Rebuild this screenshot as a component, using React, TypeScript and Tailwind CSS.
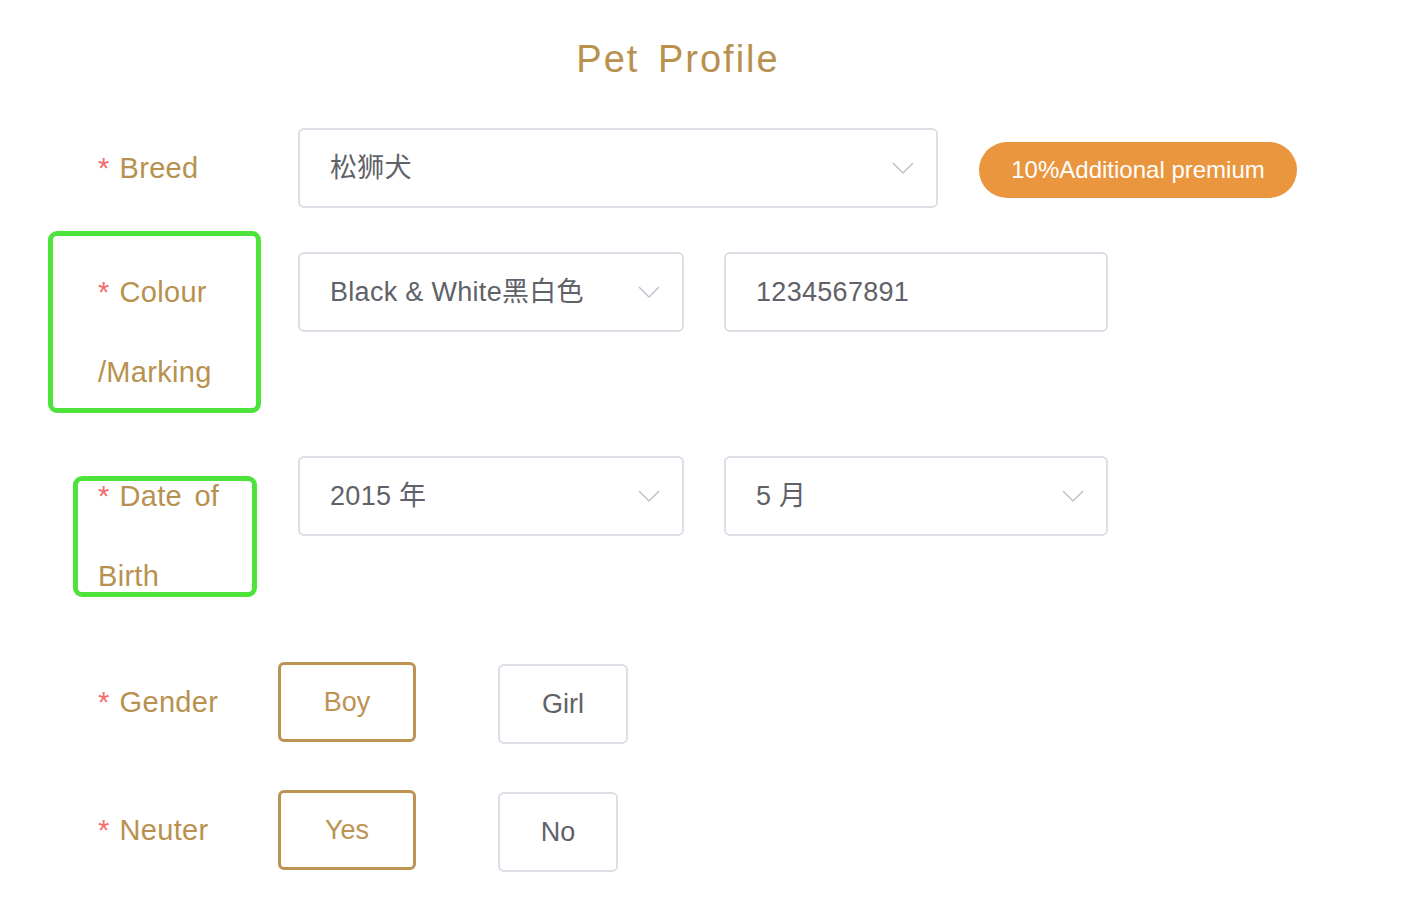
import React from 'react';

const font = "font-['Liberation_Sans','Noto_Sans_CJK_SC',sans-serif]";

const Chevron = () => (
  <svg width="22" height="12" viewBox="0 0 22 12" fill="none" className="shrink-0">
    <path d="M1 1l10 10L21 1" stroke="#c0c4cc" strokeWidth="1.5" />
  </svg>
);

const Label = ({ lines }: { lines: string[] }) => (
  <div className="text-[29px] leading-[80px] text-[#b8914f] tracking-[0.3px]">
    {lines.map((line, i) => (
      <div key={i} className="whitespace-nowrap">
        {i === 0 && <span className="text-[#f56c6c] mr-[10px]">*</span>}
        {line}
      </div>
    ))}
  </div>
);

const Select = ({ value, width }: { value: string; width: string }) => (
  <div className={`${width} h-[80px] border-2 border-[#dcdfe6] rounded-md pl-[30px] pr-[22px] flex items-center justify-between text-[27px] tracking-[0.3px] text-[#5f6268]`}>
    <span>{value}</span>
    <Chevron />
  </div>
);

const Choice = ({ text, active, width }: { text: string; active?: boolean; width: string }) => (
  <div
    className={
      active
        ? `${width} h-[80px] border-[3px] border-[#bd9352] rounded-md flex items-center justify-center text-[27px] text-[#bd9352]`
        : `${width} h-[80px] border-2 border-[#dcdfe6] rounded-md flex items-center justify-center text-[27px] text-[#5f6268] mt-[2px]`
    }
  >
    {text}
  </div>
);

export default function App() {
  return (
    <div className={`min-h-screen bg-white ${font}`}>
      <div className="w-[1356px] pt-[19px] h-[99px] text-center text-[38px] leading-[80px] text-[#b8914f] tracking-[2px] [word-spacing:6px]">
        Pet Profile
      </div>

      <div className="pl-[98px]">
        {/* Breed */}
        <div className="mt-[29px] flex items-center">
          <div className="w-[200px]">
            <Label lines={['Breed']} />
          </div>
          <Select value="松狮犬" width="w-[640px]" />
          <div className="ml-[41px] h-[56px] w-[318px] rounded-full bg-[#ea963f] flex items-center justify-center text-white text-[24px] mt-[4px]">
            10%Additional premium
          </div>
        </div>

        {/* Colour / Marking */}
        <div className="mt-[44px] flex items-start">
          <div className="w-[200px] relative">
            <Label lines={['Colour', '/Marking']} />
            <div className="absolute left-[-50px] top-[-21px] w-[213px] h-[182px] border-[5px] border-[#4de33b] rounded-[9px]" />
          </div>
          <Select value="Black & White黑白色" width="w-[386px]" />
          <div className="ml-[40px] w-[384px] h-[80px] border-2 border-[#dcdfe6] rounded-md pl-[30px] flex items-center text-[27px] tracking-[0.3px] text-[#5f6268]">
            1234567891
          </div>
        </div>

        {/* Date of Birth */}
        <div className="mt-[44px] flex items-start">
          <div className="w-[200px] relative">
            <div className="[word-spacing:4px]">
              <Label lines={['Date of', 'Birth']} />
            </div>
            <div className="absolute left-[-25px] top-[20px] w-[184px] h-[121px] border-[5px] border-[#4de33b] rounded-[9px]" />
          </div>
          <Select value="2015 年" width="w-[386px]" />
          <div className="ml-[40px]">
            <Select value="5 月" width="w-[384px]" />
          </div>
        </div>

        {/* Gender */}
        <div className="mt-[46px] flex items-start">
          <div className="w-[180px]">
            <Label lines={['Gender']} />
          </div>
          <Choice text="Boy" active width="w-[138px]" />
          <div className="ml-[82px]">
            <Choice text="Girl" width="w-[130px]" />
          </div>
        </div>

        {/* Neuter */}
        <div className="mt-[46px] flex items-start">
          <div className="w-[180px]">
            <Label lines={['Neuter']} />
          </div>
          <Choice text="Yes" active width="w-[138px]" />
          <div className="ml-[82px]">
            <Choice text="No" width="w-[120px]" />
          </div>
        </div>
      </div>
    </div>
  );
}
